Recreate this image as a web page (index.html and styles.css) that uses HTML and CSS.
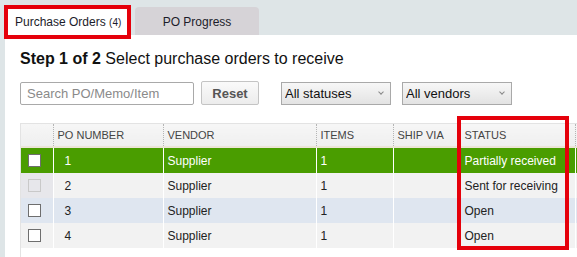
FILE: index.html
```html
<!DOCTYPE html>
<html lang="en">

<head>
  <meta charset="UTF-8">
  <meta name="viewport" content="width=device-width, initial-scale=1.0">
  <title>Receive Purchase Orders</title>
  <link rel="stylesheet" href="styles.css">
</head>

<body>
  <!-- Tabs -->
  <div class="tabs">
    <div class="tab active highlight">Purchase Orders <span class="count">(4)</span></div>
    <div class="tab">PO Progress</div>
  </div>

  <div class="panel">
    <h2><strong>Step 1 of 2</strong> Select purchase orders to receive</h2>

    <div class="toolbar">
      <input type="text" class="search" placeholder="Search PO/Memo/Item">
      <button class="reset">Reset</button>
      <div class="select-wrap status-filter">
        <select>
          <option>All statuses</option>
        </select>
      </div>
      <div class="select-wrap">
        <select>
          <option>All vendors</option>
        </select>
      </div>
    </div>

    <div class="table-wrap">
      <table class="po-table">
        <colgroup>
          <col class="col-check">
          <col class="col-po">
          <col class="col-vendor">
          <col class="col-items">
          <col class="col-ship">
          <col class="col-status">
          <col>
        </colgroup>
        <thead>
          <tr>
            <th class="check"></th>
            <th>PO Number</th>
            <th>Vendor</th>
            <th>Items</th>
            <th>Ship Via</th>
            <th>Status</th>
            <th></th>
          </tr>
        </thead>
        <tbody>
          <tr class="row-selected">
            <td class="check"><span class="box"></span></td>
            <td class="po">1</td>
            <td>Supplier</td>
            <td>1</td>
            <td></td>
            <td>Partially received</td>
            <td></td>
          </tr>
          <tr class="row-gray">
            <td class="check disabled"><span class="box"></span></td>
            <td class="po">2</td>
            <td>Supplier</td>
            <td>1</td>
            <td></td>
            <td>Sent for receiving</td>
            <td></td>
          </tr>
          <tr class="row-blue">
            <td class="check"><span class="box"></span></td>
            <td class="po">3</td>
            <td>Supplier</td>
            <td>1</td>
            <td></td>
            <td>Open</td>
            <td></td>
          </tr>
          <tr class="row-gray">
            <td class="check"><span class="box"></span></td>
            <td class="po">4</td>
            <td>Supplier</td>
            <td>1</td>
            <td></td>
            <td>Open</td>
            <td></td>
          </tr>
        </tbody>
      </table>
      <!-- highlight around status column -->
      <div class="status-mark"></div>
    </div>
  </div>
</body>

</html>
```

FILE: styles.css
```css
body {
  margin: 0;
  height: 100vh;
  font-family: "Liberation Sans", Arial, sans-serif;
  background-color: #dee5e7;
  color: #222;
  display: flex;
  flex-direction: column;
  overflow: hidden;
}

/* Tabs */
.tabs {
  display: flex;
  align-items: flex-end;
  padding: 5px 0 0 4px;
}

.tab {
  box-sizing: border-box;
  width: 124px;
  height: 28px;
  margin-left: 4px;
  padding-top: 2px;
  line-height: 26px;
  font-size: 12px;
  text-align: center;
  color: #1c1c2a;
  background-color: #d6d3d7;
  border-radius: 4px 4px 0 0;
}

.tab.active {
  margin-left: 0;
  background-color: #fff;
  text-align: left;
}

.highlight {
  position: relative;
  z-index: 1;
  width: 127px;
  height: 34px;
  margin-bottom: -4px;
  padding: 0 0 0 7px;
  border: 4px solid #e5000b;
  border-radius: 0;
}

.count {
  font-size: 10px;
}

/* Panel */
.panel {
  flex: 1;
  margin-left: 5px;
  padding: 14px 0 0 15px;
  background: #fff;
  display: flex;
  flex-direction: column;
  overflow: hidden;
}

h2 {
  margin: 0;
  font-size: 16px;
  line-height: 20px;
  font-weight: normal;
  color: #111;
}

.toolbar {
  display: flex;
  align-items: center;
  margin-top: 12px;
  height: 24px;
}

.search {
  box-sizing: border-box;
  width: 174px;
  height: 23px;
  padding: 0 6px;
  border: 1px solid #a9a9a9;
  border-radius: 2px;
  font-family: inherit;
  font-size: 13px;
}

.search::placeholder {
  color: #8a8a8a;
}

.reset {
  box-sizing: border-box;
  width: 58px;
  height: 24px;
  margin-left: 7px;
  border: 1px solid #c4c4c4;
  border-radius: 2px;
  background: linear-gradient(#fafafa, #ececec);
  font-family: inherit;
  font-size: 13px;
  font-weight: bold;
  color: #555;
}

.select-wrap {
  position: relative;
  margin-left: 11px;
}

.select-wrap.status-filter {
  margin-left: 22px;
}

.select-wrap select {
  box-sizing: border-box;
  width: 110px;
  height: 23px;
  padding: 0 3px;
  appearance: none;
  border: 1px solid #a9a9a9;
  border-radius: 0;
  background: linear-gradient(#f7f7f7, #e3e3e3);
  font-family: inherit;
  font-size: 13px;
  color: #111;
}

.select-wrap::after {
  content: "";
  position: absolute;
  right: 8px;
  top: 8px;
  width: 3px;
  height: 3px;
  border-right: 1px solid #888;
  border-bottom: 1px solid #888;
  transform: rotate(45deg);
  pointer-events: none;
}

/* Table */
.table-wrap {
  position: relative;
  flex: 1;
  margin-top: 18px;
  border-top: 1px solid #e3e3e3;
  border-left: 1px solid #e3e3e3;
}

.po-table {
  width: 580px;
  table-layout: fixed;
  border-collapse: collapse;
  font-size: 12px;
}

.col-check { width: 32px; }
.col-po { width: 110px; }
.col-vendor { width: 153px; }
.col-items { width: 77px; }
.col-ship { width: 67px; }
.col-status { width: 115px; }

th {
  height: 22px;
  padding: 0 4px;
  text-align: left;
  font-size: 11px;
  font-weight: normal;
  text-transform: uppercase;
  color: #444;
  background: linear-gradient(#f6f6f6, #efefef);
  border-left: 1px dotted #b5b5b5;
  border-bottom: 2px solid #ece5d7;
}

th.check {
  border-left: none;
}

td {
  height: 25px;
  padding: 0 4px;
  border-left: 1px solid #fff;
  white-space: nowrap;
}

td.po {
  padding-left: 11px;
}

td.check {
  padding: 0 0 0 7px;
  background: #fff;
  border-left: none;
}

td.check.disabled {
  background: #e7e7eb;
}

.box {
  display: block;
  box-sizing: border-box;
  width: 13px;
  height: 13px;
  border: 1px solid #6e6e6e;
  background: #fff;
}

.disabled .box {
  border-color: #c9c9c9;
  background: #e7e7eb;
}

.row-selected td {
  background: #4a9d00;
  color: #fff;
}

.row-gray td {
  background: #f2f2f2;
}

.row-blue td {
  background: #dfe6f0;
}

.status-mark {
  position: absolute;
  left: 436px;
  top: -8px;
  width: 112px;
  height: 134px;
  box-sizing: border-box;
  border: 4px solid #e5000b;
}
```
